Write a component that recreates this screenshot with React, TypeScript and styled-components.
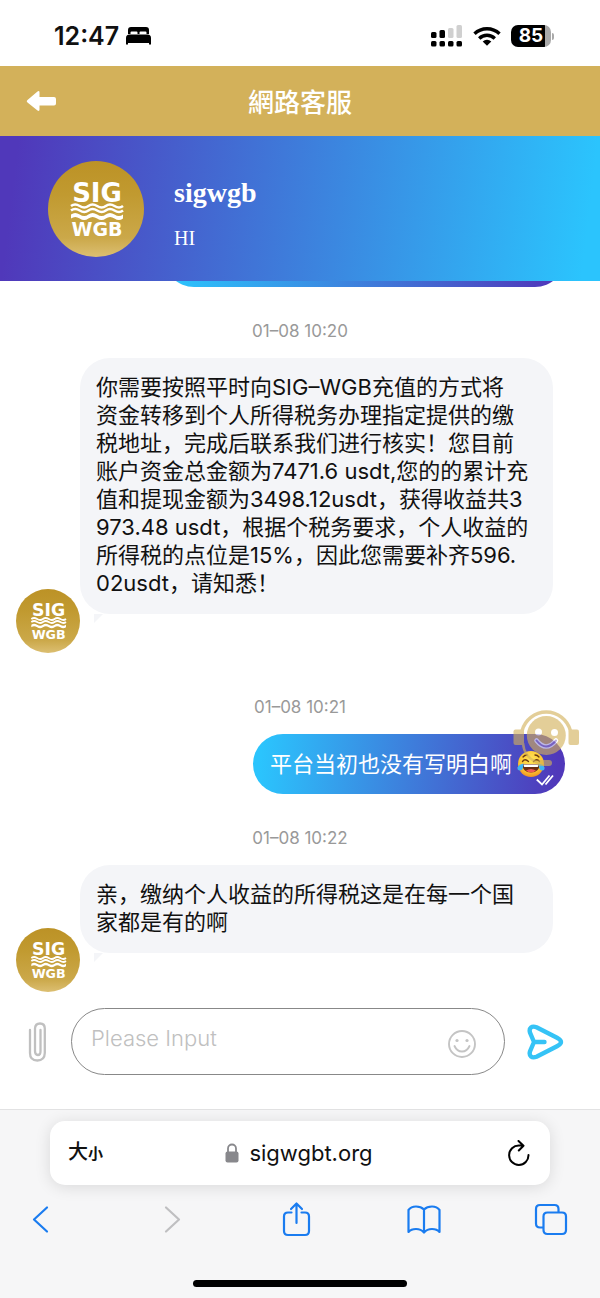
import React from "react";
import styled, { createGlobalStyle } from "styled-components";

const sans = `"Inter", "Noto Sans CJK SC", sans-serif`;

const GlobalStyle = createGlobalStyle`
  *, *::before, *::after { box-sizing: border-box; }
  body { margin: 0; background: #fff; font-family: ${sans}; color: #111; }
  button { border: 0; padding: 0; background: none; font: inherit; color: inherit; cursor: pointer; }
  svg { display: block; flex: none; }
`;

const Page = styled.div`
  display: flex;
  flex-direction: column;
  min-height: 100vh;
`;

const StatusBar = styled.div`
  display: flex;
  align-items: center;
  padding: 20px 46px 14px 54px;
  line-height: 32px;
`;

const Clock = styled.time`
  font-size: 25px;
  font-weight: 600;
  margin-right: 6px;
`;

const StatusIcons = styled.div`
  display: flex;
  align-items: center;
  gap: 10px;
  margin-left: auto;
`;

const Battery = styled.div`
  display: flex;
  align-items: center;
  gap: 1px;
`;

const BatteryBody = styled.div`
  width: 40px;
  border-radius: 7px;
  background: linear-gradient(90deg, #000 84%, #a9a9a9 84%);
  color: #fff;
  font-size: 19px;
  font-weight: 700;
  line-height: 22px;
  text-align: center;
`;

const BatteryNub = styled.div`
  width: 2px;
  height: 7px;
  border-radius: 0 4px 4px 0;
  background: #a9a9a9;
`;

const TitleBar = styled.header`
  display: grid;
  grid-template-columns: 32px 1fr 32px;
  align-items: center;
  padding: 17px 25px;
  background: #d3b15a;
  color: #fff;
`;

const Title = styled.h1`
  margin: 0;
  font: 500 26px/36px "Noto Sans CJK TC", sans-serif;
  text-align: center;
`;

const Banner = styled.section`
  display: flex;
  align-items: center;
  gap: 30px;
  padding: 25px 48px 24px;
  background: linear-gradient(97deg, #5038ba 3%, #2bc4fd 97%);
  color: #fff;
  font-family: "Liberation Serif", serif;
`;

const AgentInfo = styled.div`
  padding-top: 9px;
`;

const AgentName = styled.h2`
  margin: 0 0 17px;
  font-size: 28px;
  line-height: 32px;
`;

const Greeting = styled.p`
  margin: 0;
  font-size: 20px;
  line-height: 24px;
`;

const Chat = styled.main`
  flex: 1;
`;

const ClippedRow = styled.div`
  display: flex;
  align-items: flex-end;
  justify-content: flex-end;
  height: 6px;
  padding-right: 35px;
  overflow: hidden;
`;

const Stamp = styled.time`
  display: block;
  padding: 32px 0 15px;
  color: #999;
  font-size: 17px;
  line-height: 24px;
  text-align: center;
`;

const AgentRow = styled.div`
  display: flex;
  align-items: flex-end;
  padding: 0 47px 10px 16px;
`;

const AgentBubble = styled.div`
  position: relative;
  flex: 1;
  margin-bottom: 39px;
  padding: 15px 0 17px 16px;
  border-radius: 30px;
  background: #f4f5f8;
  font-size: 22px;
  line-height: 28px;
  white-space: pre-wrap;

  &::after {
    content: "";
    position: absolute;
    left: 14px;
    top: 100%;
    border-top: 9px solid #f4f5f8;
    border-right: 9px solid transparent;
  }
`;

const UserRow = styled.div`
  position: relative;
  display: flex;
  justify-content: flex-end;
  padding-right: 35px;
`;

const UserBubble = styled.div<{ $wide?: boolean }>`
  position: relative;
  display: flex;
  flex: none;
  align-items: center;
  gap: 5px;
  width: ${(p) => (p.$wide ? "71%" : "auto")};
  min-height: 60px;
  padding: 16px 20px 16px 17px;
  border-radius: 30px;
  background: linear-gradient(95deg, #2bc4fd 3%, #5038ba 97%);
  color: #fff;
  font-size: 22px;
  line-height: 28px;
`;

const ReadMark = styled.span`
  position: absolute;
  right: 11px;
  bottom: 8px;
`;

const SupportButton = styled.button`
  position: absolute;
  top: -25px;
  right: 21px;
  opacity: 0.62;
`;

const Composer = styled.form`
  display: flex;
  align-items: center;
  padding: 6px 36px 34px 28px;
`;

const InputFrame = styled.div`
  display: flex;
  flex: 1;
  align-items: center;
  min-width: 0;
  margin: 0 22px 0 25px;
  padding: 0 28px 0 19px;
  border: 1px solid #888;
  border-radius: 34px;
`;

const MessageInput = styled.input`
  flex: 1;
  min-width: 0;
  padding: 15px 0 22px;
  border: 0;
  outline: 0;
  background: none;
  font-family: ${sans};
  font-size: 22px;
  font-weight: 300;
  line-height: 28px;
  &::placeholder { color: #c0c0c0; opacity: 1; }
`;

const EmojiButton = styled.button`
  margin-top: 5px;
`;

const Browser = styled.footer`
  padding: 11px 0 11px;
  border-top: 1px solid #e2e2e3;
  background: #f6f6f7;
`;

const AddressBar = styled.div`
  display: grid;
  grid-template-columns: 36px 1fr 36px;
  align-items: center;
  margin: 0 50px;
  padding: 15px 20px 15px 18px;
  border-radius: 15px;
  background: #fff;
  box-shadow: 0 2px 16px rgba(0, 0, 0, 0.12);
  line-height: 32px;
`;

const TextSize = styled.button`
  display: flex;
  align-items: baseline;
  font-size: 20px;
  font-weight: 500;
`;

const SmallGlyph = styled.span`
  font-size: 15px;
  font-weight: 600;
`;

const Address = styled.div`
  display: flex;
  align-items: center;
  justify-content: center;
  gap: 10px;
  font-size: 22px;
`;

const ReloadButton = styled.button`
  justify-self: end;
`;

const Toolbar = styled.nav`
  display: flex;
  justify-content: space-between;
  padding: 16px 32px 43px 24px;
  color: #1a7cf0;
`;

const HomeIndicator = styled.div`
  width: 214px;
  height: 7px;
  margin: 0 auto;
  border-radius: 4px;
  background: #000;
`;

const Logo = ({ size, id }: { size: number; id: string }) => (
  <svg width={size} height={size} viewBox="0 0 96 96" role="img" aria-label="SIG WGB">
    <defs>
      <linearGradient id={id} x1="0" y1="0" x2="0" y2="1">
        <stop offset="0" stopColor="#bc9226" />
        <stop offset="0.35" stopColor="#c19a30" />
        <stop offset="0.8" stopColor="#cba849" />
        <stop offset="1" stopColor="#dcbf72" />
      </linearGradient>
    </defs>
    <circle cx="48" cy="48" r="48" fill={`url(#${id})`} />
    <g fill="#fff" fontFamily="DejaVu Sans" fontWeight="700" textAnchor="middle">
      <text x="49" y="41" fontSize="26">SIG</text>
      <text x="49" y="75" fontSize="19">WGB</text>
    </g>
    <g fill="none" stroke="#fff" strokeWidth="2.6">
      <path d="M23 45q4-3 8.700 0t8.700 0 8.700 0 8.700 0 8.700 0 8.500 0" />
      <path d="M23 49.500q4-3 8.700 0t8.700 0 8.700 0 8.700 0 8.700 0 8.500 0" />
    </g>
    <path fill="#fff" d="M23 53.500q4-3 8.700 0t8.700 0 8.700 0 8.700 0 8.700 0 8.500 0v4q-4 3-8.500 0t-8.700 0-8.700 0-8.700 0-8.700 0-8.700 0z" />
  </svg>
);

const BedIcon = () => (
  <svg width="27" height="18" viewBox="0 0 27 18" role="img" aria-label="Sleep focus">
    <path d="M3 7V3q0-3 3-3h15q3 0 3 3v4h-2.500V5.500q0-1-1-1h-5q-1 0-1 1V7h-2V5.500q0-1-1-1H6.500q-1 0-1 1V7z" />
    <path d="M1 17.500V11q0-3.500 3.500-3.500h18Q26 7.500 26 11v6.500h-2V16H3v1.500z" />
  </svg>
);

const SignalIcon = () => (
  <svg width="32" height="22" viewBox="0 0 32 22" role="img" aria-label="Signal">
    <g fill="#000">
      {[0, 8.500, 17, 25.500].map((x) => (
        <rect key={x} x={x} y="16" width="5.500" height="5.500" rx="1.500" />
      ))}
      <rect x="0" y="7" width="5.500" height="6" rx="1.500" />
      <rect x="8.500" y="5" width="5.500" height="8" rx="1.500" />
    </g>
    <g fill="#d0d0d0">
      <rect x="17" y="3" width="5.500" height="10" rx="1.500" />
      <rect x="25.500" y="0" width="5.500" height="13" rx="1.500" />
    </g>
  </svg>
);

const WifiIcon = () => (
  <svg width="28" height="20" viewBox="0 0 28 20" role="img" aria-label="Wi-Fi">
    <g fill="none" stroke="#000" strokeWidth="3.400">
      <path d="M1.500 7.800a18 18 0 0 1 25 0" />
      <path d="M6.200 12.400a11.300 11.300 0 0 1 15.600 0" />
    </g>
    <path d="M14 19.800l-4.300-4.300a6.200 6.200 0 0 1 8.600 0z" />
  </svg>
);

const BackArrow = () => (
  <svg width="32" height="20" viewBox="0 0 32 20" fill="#fff">
    <path d="M2.500 9 12.500.500q2-1.200 2 1V6H29q2 0 2 2v4.500q0 2-2 2H14.500v4q0 2.200-2 1L2.500 11.500q-1.500-1.200 0-2.500z" />
  </svg>
);

const JoyEmoji = () => (
  <svg width="28" height="28" viewBox="0 0 28 28" role="img" aria-label="😂">
    <defs>
      <radialGradient id="joy" cx="0.5" cy="0.35" r="0.65">
        <stop offset="0" stopColor="#ffe65c" />
        <stop offset="0.7" stopColor="#fcc42f" />
        <stop offset="1" stopColor="#ee9222" />
      </radialGradient>
    </defs>
    <circle cx="14" cy="14" r="13" fill="url(#joy)" />
    <path d="M5.500 14h17q0 8.500-8.500 8.500T5.500 14z" fill="#6b2f12" />
    <path d="M6.500 14.400h15l-.7 2.600H7.200z" fill="#fff" />
    <path d="M9 20.500q5-3 10 0-2 2-5 2t-5-2z" fill="#ef5a52" />
    <g fill="none" stroke="#6b3a10" strokeWidth="1.300" strokeLinecap="round">
      <path d="M5.500 11.500q2.500-3.500 6 0M16.500 11.500q3.500-3.500 6 0" />
      <path d="M6 7q1.500-2 4-2M18 5q2.500 0 4 2" />
    </g>
    <path d="M6.500 13.500Q6.500 20 3 20.500 0 20.500.500 17.500 1.500 14.500 6.500 13.500z" fill="#3fb4f5" />
    <path d="M21.500 13.500q0 6.500 3.500 7 3 0 2.500-3-1-3-6-4z" fill="#3fb4f5" />
  </svg>
);

const DoubleCheck = () => (
  <svg width="18" height="12" viewBox="0 0 18 12" fill="none" stroke="#fff" strokeWidth="1.800" role="img" aria-label="Read">
    <path d="M.8 5.500 6 10.500 13.500 1.500M9.500 10.500 17 1.500" />
  </svg>
);

const HeadsetFace = () => (
  <svg width="66" height="60" viewBox="0 0 66 60">
    <path d="M9 22a25 25 0 0 1 48.500 0" fill="none" stroke="#d3b15a" strokeWidth="3.500" />
    <path d="M10 34q1 14 14 19.500" fill="none" stroke="#d3b15a" strokeWidth="2.500" />
    <rect x="24" y="51" width="15" height="6" rx="3" fill="#d3b15a" />
    <rect x="0.500" y="20.500" width="10.500" height="15.500" rx="2" fill="#d3b15a" />
    <rect x="55.500" y="20.500" width="10.500" height="15.500" rx="2" fill="#d3b15a" />
    <circle cx="33.300" cy="26.500" r="19.500" fill="#d3b15a" />
    <circle cx="25.500" cy="23" r="3.500" fill="#fff" />
    <circle cx="41.500" cy="23.500" r="3.500" fill="#fff" />
    <path d="M23.500 31.500q9.500 12 19.500 0" fill="none" stroke="#fff" strokeWidth="4.500" strokeLinecap="round" />
    <path d="M23.500 31.500q9.500 12 19.500 0" fill="none" stroke="#9078c4" strokeWidth="2" strokeLinecap="round" />
  </svg>
);

const PaperclipIcon = () => (
  <svg width="18" height="40" viewBox="0 0 18 40" fill="none" stroke="#c0c0c0" strokeWidth="2.300" strokeLinecap="round">
    <path d="M2 8v23q0 7.500 7.300 7.500t7.500-7.500V6.500Q16.800 1.500 12 1.500T7 6.500V29q0 4 2.800 4t2.700-4V8" />
  </svg>
);

const SmileIcon = () => (
  <svg width="28" height="28" viewBox="0 0 28 28" fill="none" stroke="#c4c4c4" strokeWidth="1.900">
    <circle cx="14" cy="14" r="13" />
    <path d="M6.500 16q2.500 5.500 7.500 5.500t7.500-5.500" strokeLinecap="round" />
    <circle cx="9" cy="10.500" r="1.600" fill="#c4c4c4" stroke="none" />
    <circle cx="19" cy="10.500" r="1.600" fill="#c4c4c4" stroke="none" />
  </svg>
);

const SendIcon = () => (
  <svg width="37" height="36" viewBox="0 0 37 36" fill="none" stroke="#35c3f6" strokeWidth="4.400" strokeLinecap="round" strokeLinejoin="round">
    <path d="M9.500 3.300 30 13.800q8 4.200 0 8.400L9.500 32.700q-3.500 1.400-5.500-.2t-1-5.200L7 18 3 8.700Q2 5.100 4 3.500t5.500-.2zM7 18h10.500" />
  </svg>
);

const LockIcon = () => (
  <svg width="14" height="20" viewBox="0 0 14 20">
    <path d="M3 9V5.500a4 4 0 0 1 8 0V9" fill="none" stroke="#88888c" strokeWidth="1.800" />
    <rect x="0.500" y="8.500" width="13" height="11" rx="2" fill="#88888c" />
  </svg>
);

const ReloadIcon = () => (
  <svg width="22" height="26" viewBox="0 0 22 26" fill="none" stroke="#000" strokeWidth="2" strokeLinecap="round" strokeLinejoin="round">
    <path d="M20.500 15A9.700 9.700 0 1 1 11 5.500h4M10.500 1l5 4.700-4.700 4.800" />
  </svg>
);

const ToolIcon = ({ d, color = "currentColor" }: { d: string; color?: string }) => (
  <svg width="34" height="36" viewBox="0 0 34 36" fill="none" stroke={color} strokeWidth="2.200" strokeLinecap="round" strokeLinejoin="round">
    <path d={d} />
  </svg>
);

const tools = [
  { label: "Back", d: "M23 6.500 10 18.500 23 30.500" },
  { label: "Forward", d: "M14 6.500 27 18.500 14 30.500", color: "#bfbfc1" },
  { label: "Share", d: "M12.500 11.500H9q-4 0-4 4V30q0 4 4 4h17q4 0 4-4V15.500q0-4-4-4h-3.500M17.500 22V2.500M12 8l5.500-5.500L23 8" },
  { label: "Bookmarks", d: "M17 8.500Q14 5.500 9 5.500T1.500 9v22Q4 28 9 28t8 3.500M17 8.500Q20 5.500 25 5.500T32.500 9v22Q30 28 25 28t-8 3.500zV31" },
  { label: "Tabs", d: "M9 26.500H6q-4 0-4-4V8q0-4 4-4h14.500q4 0 4 4v3M13.500 11.500H28q4 0 4 4V29q0 4-4 4H13.500q-4 0-4-4V15.500q0-4 4-4z" },
];

const firstReply = `你需要按照平时向SIG–WGB充值的方式将
资金转移到个人所得税务办理指定提供的缴
税地址，完成后联系我们进行核实！您目前
账户资金总金额为7471.6 usdt,您的的累计充
值和提现金额为3498.12usdt，获得收益共3
973.48 usdt，根据个税务要求，个人收益的
所得税的点位是15%，因此您需要补齐596.
02usdt，请知悉！`;

const secondReply = `亲，缴纳个人收益的所得税这是在每一个国
家都是有的啊`;

const App = () => (
  <Page>
    <GlobalStyle />
    <StatusBar>
      <Clock>12:47</Clock>
      <BedIcon />
      <StatusIcons>
        <SignalIcon />
        <WifiIcon />
        <Battery>
          <BatteryBody>85</BatteryBody>
          <BatteryNub />
        </Battery>
      </StatusIcons>
    </StatusBar>
    <TitleBar>
      <button aria-label="Go back"><BackArrow /></button>
      <Title>網路客服</Title>
    </TitleBar>
    <Banner>
      <Logo size={96} id="goldLarge" />
      <AgentInfo>
        <AgentName>sigwgb</AgentName>
        <Greeting>HI</Greeting>
      </AgentInfo>
    </Banner>
    <Chat>
      <ClippedRow>
        <UserBubble $wide />
      </ClippedRow>
      <Stamp>01–08 10:20</Stamp>
      <AgentRow>
        <Logo size={64} id="goldFirst" />
        <AgentBubble>{firstReply}</AgentBubble>
      </AgentRow>
      <Stamp>01–08 10:21</Stamp>
      <UserRow>
        <UserBubble>
          <span>平台当初也没有写明白啊</span>
          <JoyEmoji />
          <ReadMark><DoubleCheck /></ReadMark>
        </UserBubble>
        <SupportButton aria-label="Customer support"><HeadsetFace /></SupportButton>
      </UserRow>
      <Stamp>01–08 10:22</Stamp>
      <AgentRow>
        <Logo size={64} id="goldSecond" />
        <AgentBubble>{secondReply}</AgentBubble>
      </AgentRow>
    </Chat>
    <Composer onSubmit={(e) => e.preventDefault()}>
      <button type="button" aria-label="Attach file"><PaperclipIcon /></button>
      <InputFrame>
        <MessageInput aria-label="Message" placeholder="Please Input" />
        <EmojiButton type="button" aria-label="Insert emoji"><SmileIcon /></EmojiButton>
      </InputFrame>
      <button type="submit" aria-label="Send"><SendIcon /></button>
    </Composer>
    <Browser>
      <AddressBar>
        <TextSize aria-label="Text size">大<SmallGlyph>小</SmallGlyph></TextSize>
        <Address>
          <LockIcon />
          <span>sigwgbt.org</span>
        </Address>
        <ReloadButton aria-label="Reload"><ReloadIcon /></ReloadButton>
      </AddressBar>
      <Toolbar>
        {tools.map((tool) => (
          <button key={tool.label} aria-label={tool.label}>
            <ToolIcon d={tool.d} color={tool.color} />
          </button>
        ))}
      </Toolbar>
      <HomeIndicator />
    </Browser>
  </Page>
);

export default App;
